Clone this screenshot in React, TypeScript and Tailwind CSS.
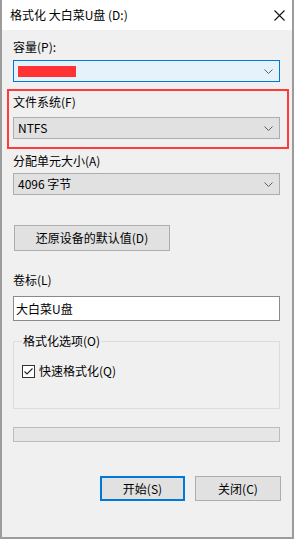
const font = { fontFamily: '"Noto Sans CJK SC", "Noto Sans", sans-serif' };

function Chevron() {
  return (
    <svg width="9" height="5" viewBox="0 0 9 5" className="shrink-0">
      <path d="M0.5 0.5 L4.5 4.5 L8.5 0.5" fill="none" stroke="#5f5f5f" strokeWidth="1" />
    </svg>
  );
}

interface ComboProps {
  children?: React.ReactNode;
  active?: boolean;
}

function Combo({ children, active }: ComboProps) {
  return (
    <div
      className={
        "h-[22px] flex items-center justify-between pl-[4px] pr-[6px] border " +
        (active ? "bg-[#e5f1fb] border-[#0078d7]" : "bg-[#e1e1e1] border-[#adadad]")
      }
    >
      <div className="text-[12px] leading-[16px] text-black">{children}</div>
      <Chevron />
    </div>
  );
}

export default function App() {
  return (
    <div
      style={font}
      className="w-[294px] h-[539px] flex flex-col bg-[#f0f0f0] border-x-2 border-b-2 border-[#9c9c9c] text-black"
    >
      <div className="h-[30px] shrink-0 bg-white flex items-center justify-between pl-[8px] pr-[7px]">
        <span className="text-[12px] leading-[16px]">格式化 大白菜U盘 (D:)</span>
        <svg width="11" height="11" viewBox="0 0 11 11">
          <path d="M0.5 0.5 L10.5 10.5 M10.5 0.5 L0.5 10.5" stroke="#111" strokeWidth="1.1" />
        </svg>
      </div>

      <div className="flex flex-col pl-[11px] pr-[12px]">
        <div className="mt-[9px] text-[12px] leading-[16px]">容量(P):</div>
        <div className="mt-[5px]">
          <Combo active>
            <div className="w-[58px] h-[11px] bg-[#ff3333]" />
          </Combo>
        </div>

        <div className="mt-[7px] ml-[-6px] mr-[-9px] border-2 border-[#ff3b3b] pl-[4px] pr-[7px] pt-[3px] pb-[8px]">
          <div className="text-[12px] leading-[16px]">文件系统(F)</div>
          <div className="mt-[7px]">
            <Combo>NTFS</Combo>
          </div>
        </div>

        <div className="mt-[4px] text-[12px] leading-[16px]">分配单元大小(A)</div>
        <div className="mt-[4px]">
          <Combo>4096 字节</Combo>
        </div>

        <button className="mt-[30px] ml-[1px] w-[156px] h-[26px] bg-[#e1e1e1] border border-[#adadad] text-[12px] leading-[16px]">
          还原设备的默认值(D)
        </button>

        <div className="mt-[21px] text-[12px] leading-[16px]">卷标(L)</div>
        <div className="mt-[8px] h-[25px] bg-white border border-[#8a8a8a] flex items-center pl-[2px] text-[12px] leading-[16px]">
          大白菜U盘
        </div>

        <div className="mt-[20px] h-[68px] border border-[#dcdcdc] flex flex-col">
          <span className="-mt-[9px] ml-[8px] w-fit px-[1px] bg-[#f0f0f0] text-[12px] leading-[16px]">格式化选项(O)</span>
          <div className="mt-[14px] ml-[8px] flex items-center gap-[4px]">
            <svg width="13" height="13" viewBox="0 0 13 13" className="shrink-0">
              <rect x="0.5" y="0.5" width="12" height="12" fill="#fff" stroke="#333" />
              <path d="M2.5 6.5 L5 9 L10.5 3.5" fill="none" stroke="#222" strokeWidth="1.1" />
            </svg>
            <span className="text-[12px] leading-[16px]">快速格式化(Q)</span>
          </div>
        </div>

        <div className="mt-[18px] h-[15px] bg-[#e6e6e6] border border-[#bcbcbc]" />

        <div className="mt-[34px] flex justify-end gap-[10px] pr-[-1px]">
          <button className="w-[85px] h-[25px] bg-[#e1e1e1] border-2 border-[#0078d7] text-[12px] leading-[16px]">
            开始(S)
          </button>
          <button className="w-[86px] h-[25px] bg-[#e1e1e1] border border-[#adadad] text-[12px] leading-[16px] mr-[-1px]">
            关闭(C)
          </button>
        </div>
      </div>
    </div>
  );
}
